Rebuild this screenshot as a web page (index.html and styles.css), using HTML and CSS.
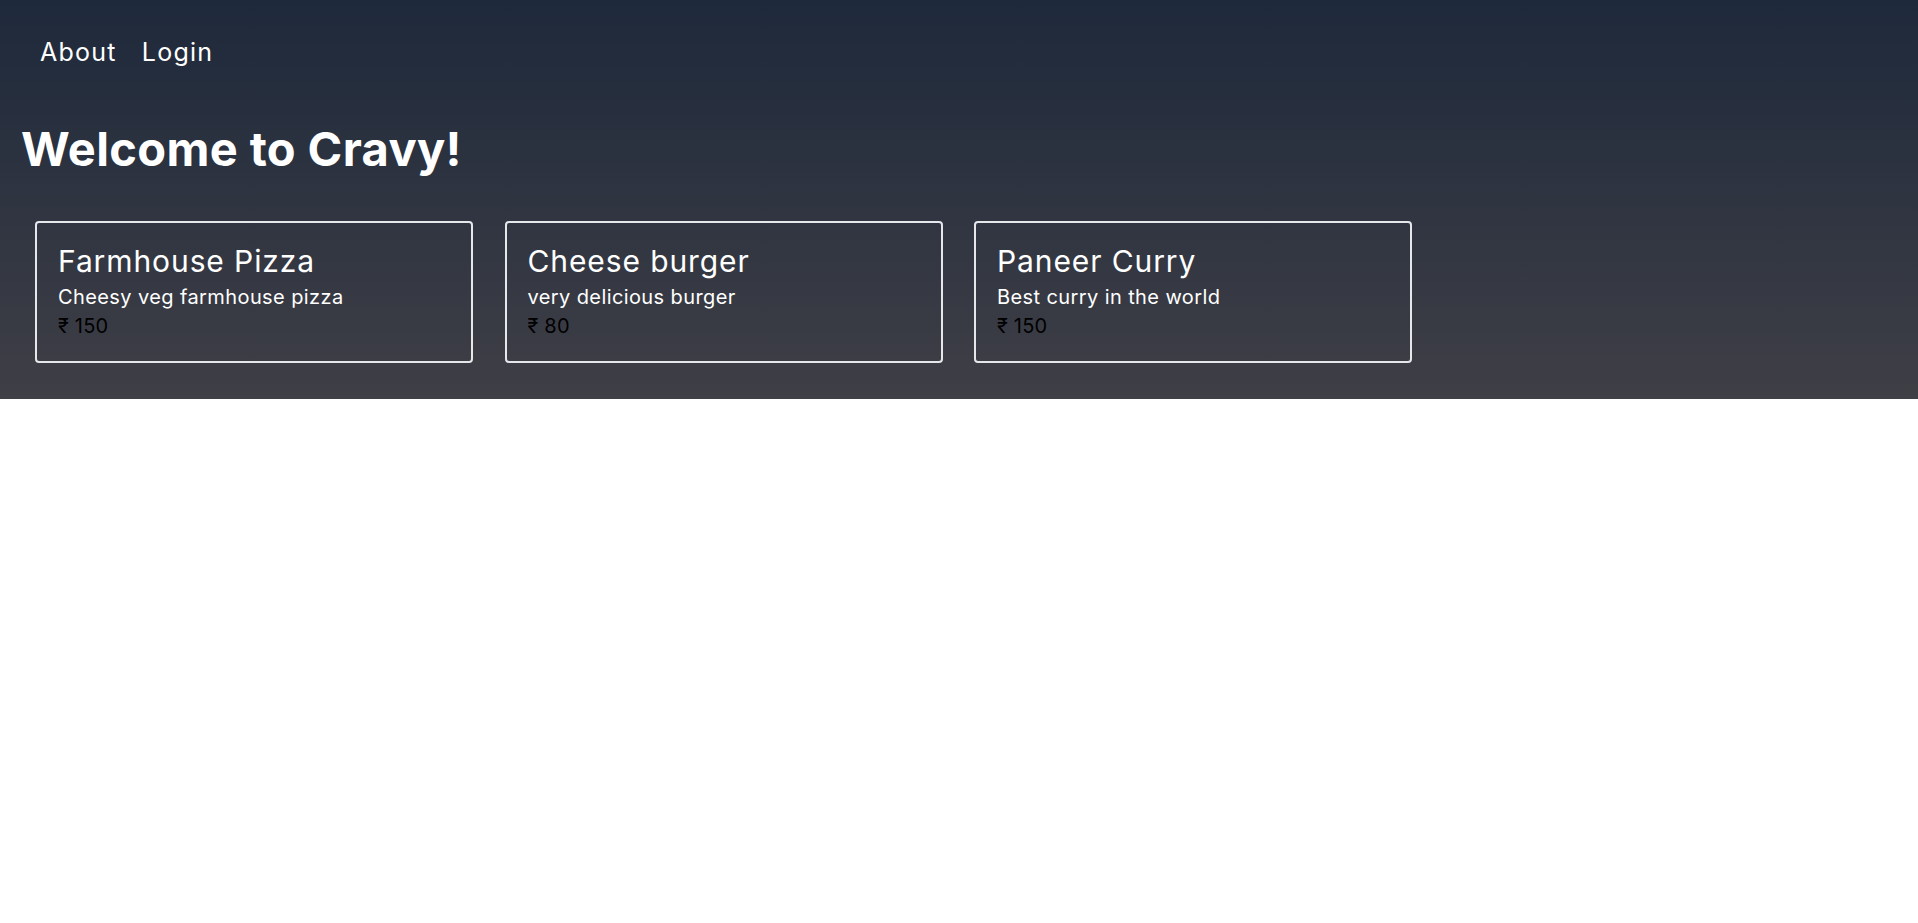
FILE: index.html
```html
<!DOCTYPE html>
<html lang="en">
<head>
<meta charset="utf-8">
<title>Cravy</title>
<link rel="stylesheet" href="styles.css">
</head>
<body>
<header class="hero">
  <nav class="nav">
    <a class="nav-link" href="#">About</a>
    <a class="nav-link" href="#">Login</a>
  </nav>
  <h1 class="title">Welcome to Cravy!</h1>
  <section class="menu">
    <article class="card">
      <h2 class="card-name">Farmhouse Pizza</h2>
      <p class="card-desc">Cheesy veg farmhouse pizza</p>
      <p class="card-price">₹ 150</p>
    </article>
    <article class="card">
      <h2 class="card-name">Cheese burger</h2>
      <p class="card-desc">very delicious burger</p>
      <p class="card-price">₹ 80</p>
    </article>
    <article class="card">
      <h2 class="card-name">Paneer Curry</h2>
      <p class="card-desc">Best curry in the world</p>
      <p class="card-price">₹ 150</p>
    </article>
  </section>
</header>
</body>
</html>
```
FILE: styles.css
```css
* { box-sizing: border-box; }
html, body { margin: 0; padding: 0; background: #ffffff; }
body { font-family: Inter, "Noto Sans", "DejaVu Sans", sans-serif; color: #fff; }

.hero {
  background: linear-gradient(to bottom, #1e293b, #3f3f46);
  padding: 36px 0 36px 0;
  height: 399px;
}

.nav {
  display: flex;
  gap: 25px;
  padding-left: 40px;
  height: 32px;
}
.nav-link {
  color: #fff;
  text-decoration: none;
  font-size: 25px;
  line-height: 32px;
  letter-spacing: 0.05em;
}

.title {
  margin: 57px 0 0 0;
  padding-left: 21px;
  font-size: 47px;
  line-height: 48px;
  font-weight: 700;
  letter-spacing: 0.008em;
}

.menu {
  display: flex;
  gap: 31.5px;
  padding-left: 35px;
  margin-top: 48px;
}

.card {
  width: 438px;
  height: 142px;
  border: 2px solid #e5e7eb;
  border-radius: 4px;
  padding: 20px 20px 0 21px;
}
.card-name {
  margin: 0;
  font-size: 30px;
  line-height: 36px;
  font-weight: 400;
  letter-spacing: 0.03em;
}
.card-desc {
  margin: 4px 0 0 0;
  font-size: 20px;
  line-height: 28px;
  letter-spacing: 0.02em;
}
.card-price {
  margin: 1px 0 0 0;
  font-size: 20px;
  line-height: 28px;
  color: #000;
  letter-spacing: 0.01em;
}
```
